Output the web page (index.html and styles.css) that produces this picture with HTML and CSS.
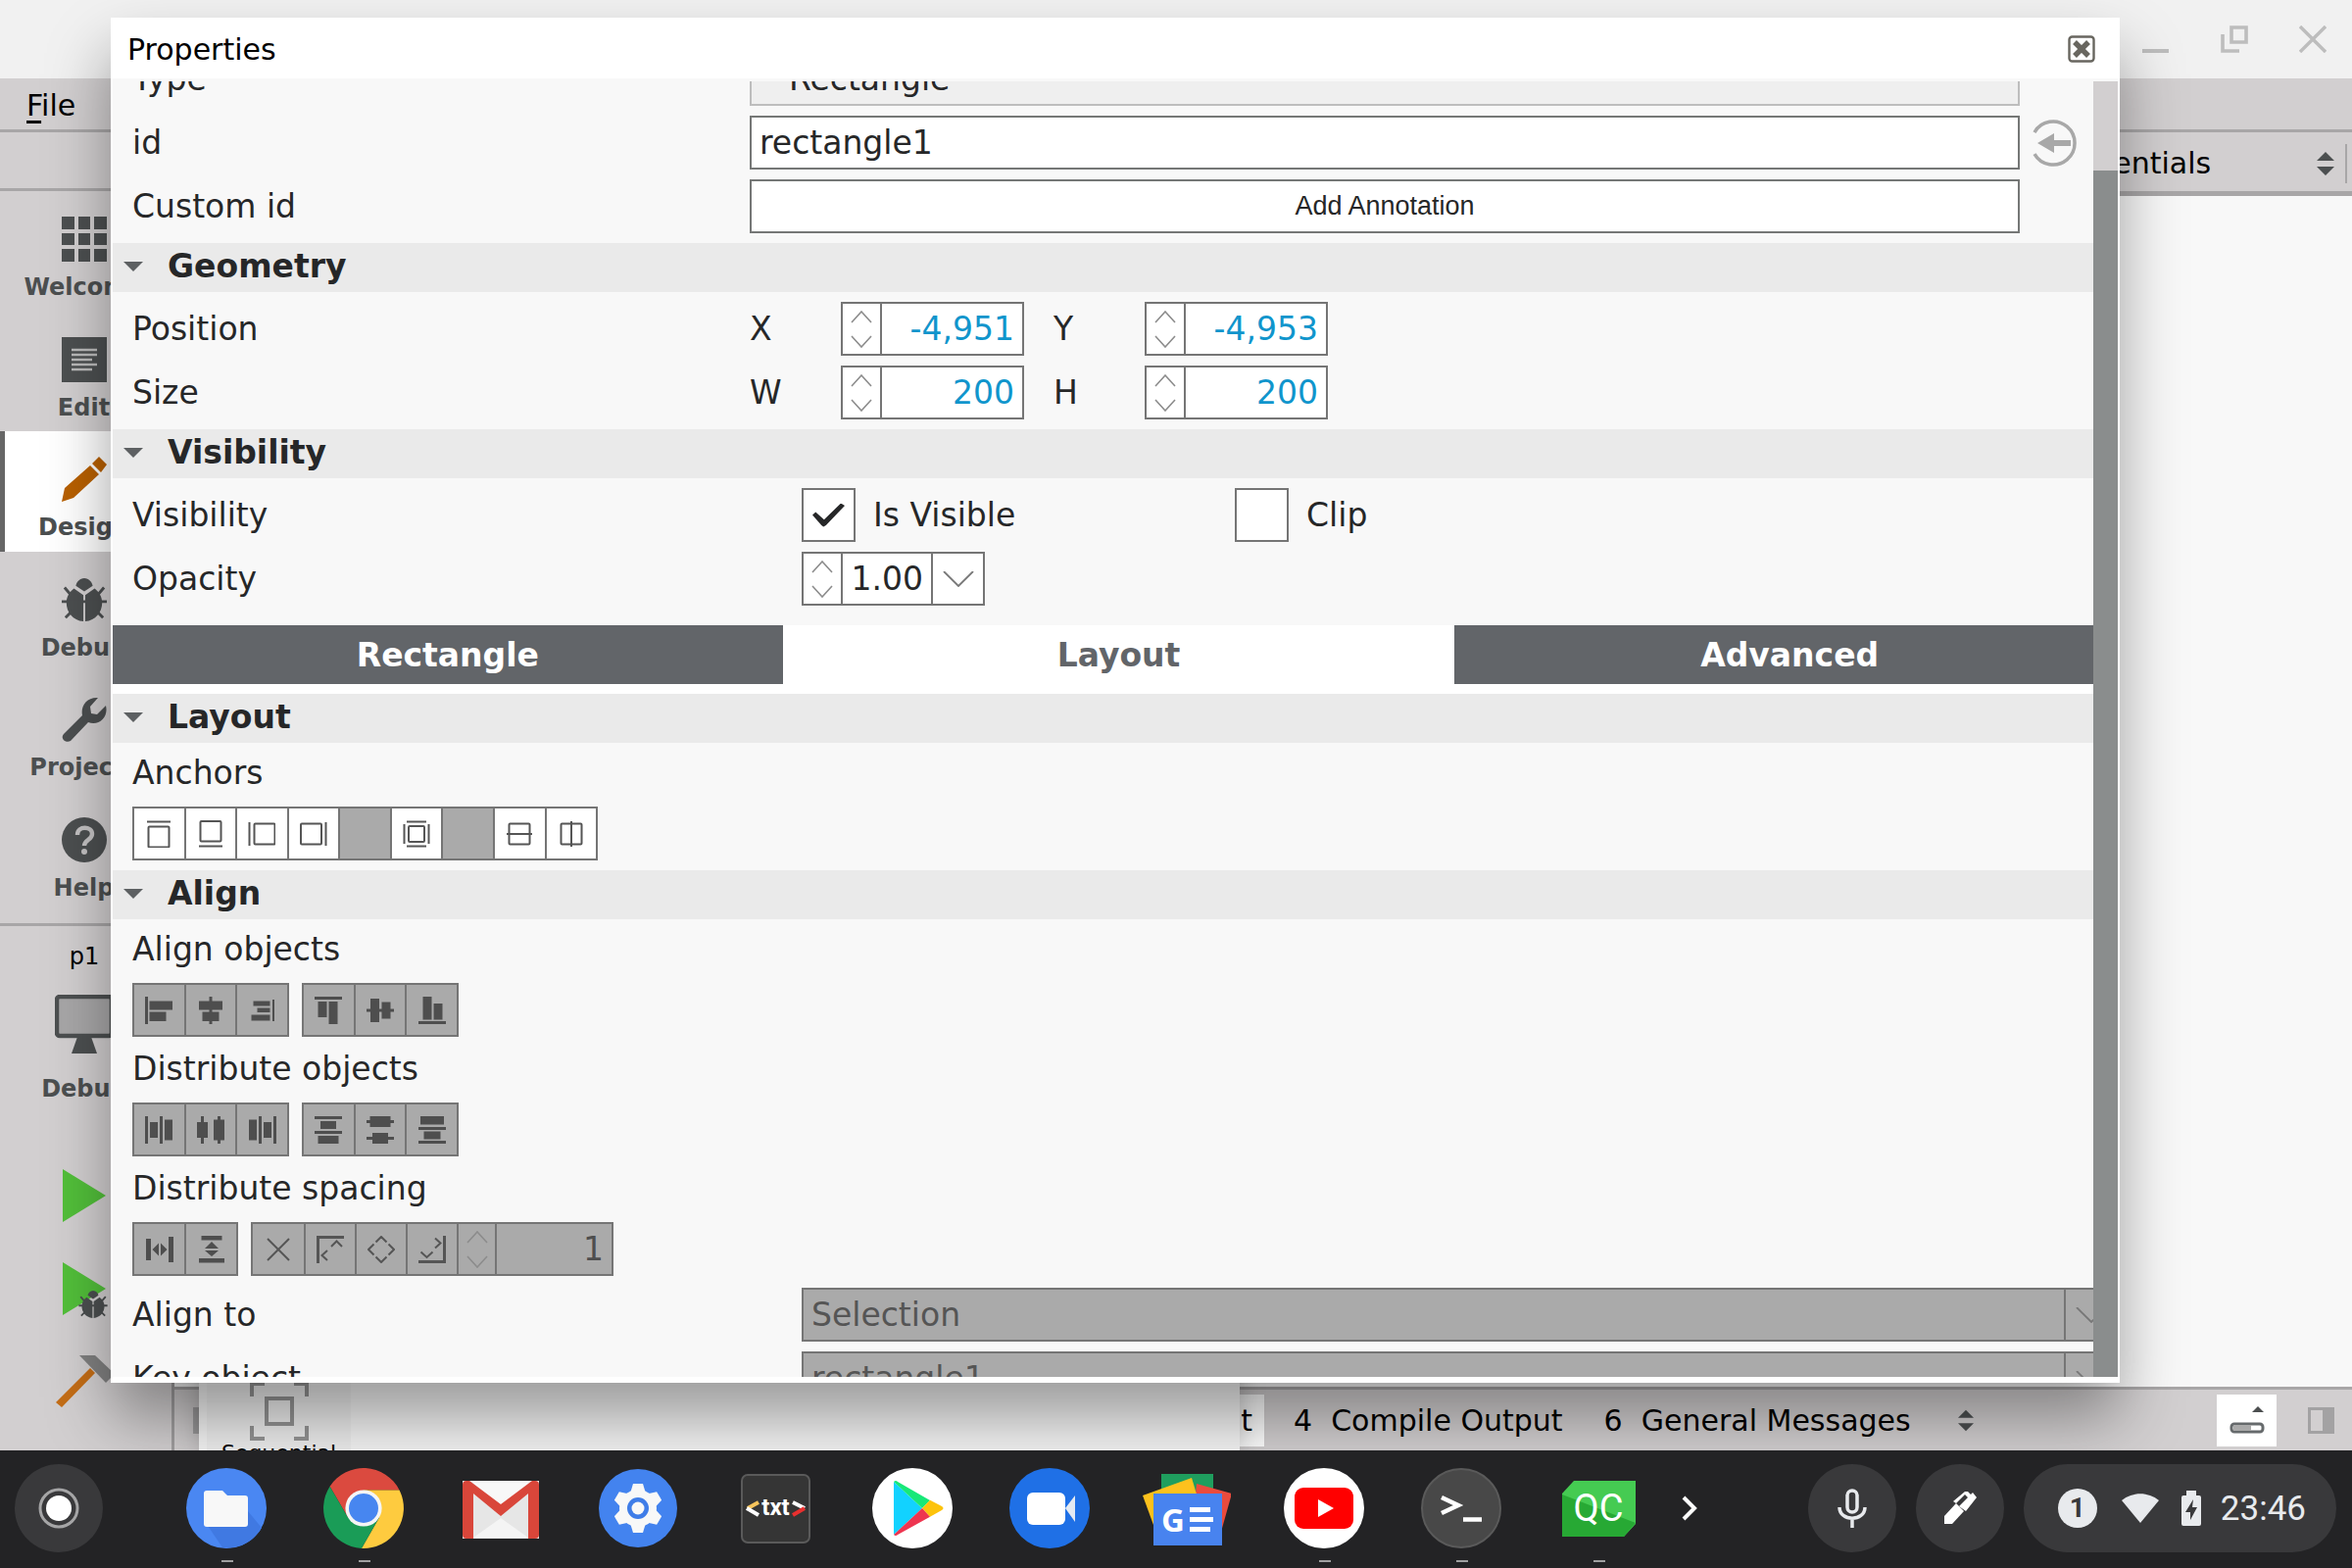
FILE: index.html
```html
<!DOCTYPE html>
<html lang="en">
<head>
  <meta charset="UTF-8">
  <title>Properties</title>
  <link rel="stylesheet" href="styles.css">
</head>
<body>
  <svg class="symbols" aria-hidden="true">
    <symbol id="bug" viewBox="0 0 48 46"><path d="M24 0c5 0 8 4 9 8l-9 6-9-6c1-4 4-8 9-8zM13 11l10 7v28C12 45 5 36 5 26c0-6 3-11 8-15zM35 11l-10 7v28c11-1 18-10 18-20 0-6-3-11-8-15z"/><path d="M0 25h48M3 10l6 7M45 10l-6 7M4 42l7-7M44 42l-7-7" stroke="#4c4f50" stroke-width="3"/></symbol>
    <symbol id="steps" viewBox="0 0 22 38"><path d="M1 12 11 1l10 11M1 26l10 11 10-11" fill="none" stroke="#8c8c8c" stroke-width="1.6"/></symbol>
    <symbol id="drop" viewBox="0 0 32 16"><path d="M1 0l15 15L31 0" fill="none" stroke="#777" stroke-width="1.8"/></symbol>
    <symbol id="updown" viewBox="0 0 18 24"><path d="M9 0l9 9H0zM9 24l9-9H0z"/></symbol>
  </svg>

  <div class="desktop">
    <div class="ide">
      <div class="titlebar">
        <button aria-label="Minimize"><svg width="28" height="28" viewBox="0 0 28 28"><path d="M0 24h27v4H0z" fill="#bdbdbd"/></svg></button>
        <button aria-label="Restore"><svg width="28" height="28" viewBox="0 0 28 28" fill="none" stroke="#bdbdbd" stroke-width="3.6"><path d="M11 2h15v15H11zM2 9v17h17"/></svg></button>
        <button aria-label="Close window"><svg width="28" height="28" viewBox="0 0 28 28" fill="none" stroke="#bdbdbd" stroke-width="3.4"><path d="M1 1l26 26M27 1L1 27"/></svg></button>
      </div>
      <div class="menubar"><button><u>F</u>ile</button></div>
      <div class="ide-body">
        <div class="sidebar">
          <div class="strip"></div>
          <div class="modes">
            <button><svg width="46" height="46" viewBox="0 0 46 46"><path d="M0 0h13v13H0zM17 0h12v13H17zM33 0h13v13H33zM0 17h13v12H0zM17 17h12v12H17zM33 17h13v12H33zM0 33h13v13H0zM17 33h12v13H17zM33 33h13v13H33z"/></svg>Welcome</button>
            <button><svg width="46" height="46" viewBox="0 0 46 46"><path d="M0 0h46v46H0z"/><path d="M10 13h26M10 18h26M10 23h21M10 28h26M10 33h21" stroke="#bbb" stroke-width="2.6"/></svg>Edit</button>
            <button class="active"><svg width="46" height="46" viewBox="0 0 46 46" fill="#b86000"><path d="M0 46l3-14 26-23 9 9-26 24zM31 7l7-7 8 8-6 8z"/></svg>Design</button>
            <button><svg width="46" height="46"><use href="#bug"/></svg>Debug</button>
            <button><svg width="46" height="46" viewBox="0 0 46 46"><path d="M2 38l19-19C19 9 26 0 37 1l-8 9 1 7 6 1 9-9c3 12-7 21-18 17L9 45c-5 3-11-3-7-7z"/></svg>Projects</button>
            <button><svg width="46" height="46" viewBox="0 0 46 46"><circle cx="23" cy="23" r="23"/><path d="M16 18c0-10 15-9 15-1 0 6-8 6-8 12" fill="none" stroke="#c4c2c3" stroke-width="4.4"/><circle cx="23" cy="35" r="3" fill="#c4c2c3"/></svg>Help</button>
          </div>
          <div class="kit">
            <span class="project">p1</span>
            <svg width="60" height="60" viewBox="0 0 60 60"><rect x="2" y="2" width="56" height="40" rx="3" fill="#a8a7a8" stroke="#4c4f50" stroke-width="4.5"/><path d="M23 43h14l6 17H17z"/></svg>
            <span class="kit-name">Debug</span>
          </div>
          <div class="run">
            <button aria-label="Run"><svg width="44" height="54" viewBox="0 0 44 54"><path d="M0 0l44 27L0 54z" fill="#52bf3a"/></svg></button>
            <button aria-label="Start debugging"><svg width="44" height="54" viewBox="0 0 44 54" overflow="visible"><path d="M0 0l44 27L0 54z" fill="#52bf3a"/><use href="#bug" x="15" y="29" width="32" height="28"/></svg></button>
            <button aria-label="Build"><svg width="60" height="54" viewBox="0 0 60 54"><path d="M25 0h16l20 19-9 9z" fill="#808080"/><path d="M36 13l5 5L7 53l-6-5z" fill="#c46d16"/></svg></button>
          </div>
        </div>
        <div class="main">
          <div class="toolbar">
            <select aria-label="Workspace"><option>Essentials</option></select>
            <svg width="18" height="24"><use href="#updown"/></svg>
          </div>
          <div class="canvas"></div>
          <div class="statusbar">
            <button class="pane-toggle" aria-label="Toggle left pane"><svg width="27" height="27" viewBox="0 0 27 27"><path d="M0 0h27v27H0zM12 3v21h12V3z" fill="#a3a2a3" fill-rule="evenodd"/></svg></button>
            <button class="out current">3  Application Output</button>
            <button class="out">4  Compile Output</button>
            <button class="out">6  General Messages</button>
            <svg class="more" width="16" height="23"><use href="#updown"/></svg>
            <button class="progress-toggle" aria-label="Toggle progress details"><svg width="36" height="28" viewBox="0 0 36 28"><path d="M29 0l6 6H23z"/><rect x="2" y="18" width="32" height="8" rx="3" fill="#fff" stroke="#666a6c" stroke-width="3"/><path d="M4 19h18v6H4z" fill="#aaa"/></svg></button>
            <button class="pane-toggle" aria-label="Toggle right pane"><svg width="27" height="27" viewBox="0 0 27 27"><path d="M0 0h27v27H0zM3 3v21h12V3z" fill="#a3a2a3" fill-rule="evenodd"/></svg></button>
          </div>
        </div>
      </div>
    </div>

    <div class="library">
      <div class="library-item">
        <svg width="60" height="60" viewBox="0 0 60 60" fill="none" stroke="#949494"><path d="M2 15V2h13M45 2h13v13M58 45v13H45M15 58H2V45" stroke-width="4"/><rect x="17" y="17" width="26" height="26" stroke-width="4"/></svg>
        Sequential
      </div>
    </div>

    <div class="dialog" role="dialog" aria-labelledby="dialog-title">
      <div class="dialog-head">
        <span id="dialog-title">Properties</span>
        <button aria-label="Close"><svg width="28" height="28" viewBox="0 0 28 28"><rect x="1.500" y="1.500" width="25" height="25" rx="3" fill="none" stroke="#68665f" stroke-width="2.400"/><path d="M7 7l14 14M21 7L7 21" stroke="#68665f" stroke-width="5.500"/></svg></button>
      </div>
      <div class="dialog-body">
        <div class="viewport">
          <div class="content">
            <div class="row">
              <label for="type">Type</label>
              <input id="type" class="field readonly" value="Rectangle" readonly>
              <span class="row-end"></span>
            </div>
            <div class="row">
              <label for="id">id</label>
              <input id="id" class="field" value="rectangle1">
              <span class="row-end"><button class="export" aria-label="Export as alias"><svg width="48" height="48" viewBox="0 0 48 48"><path d="M2 13a22 22 0 1 1 0 22" fill="none" stroke="#a8a8a8" stroke-width="3.500"/><path d="M5 24l17-10v7h17v6H22v7z" fill="#a8a8a8"/></svg></button></span>
            </div>
            <div class="row">
              <span class="label">Custom id</span>
              <button class="field annotate">Add Annotation</button>
              <span class="row-end"></span>
            </div>

            <h2>Geometry</h2>
            <div class="rows">
              <div class="row">
                <span class="label">Position</span>
                <label class="axis" for="x">X</label>
                <span class="spin"><button aria-label="Step x"><svg width="22" height="38"><use href="#steps"/></svg></button><input id="x" value="-4,951"></span>
                <label class="axis second" for="y">Y</label>
                <span class="spin"><button aria-label="Step y"><svg width="22" height="38"><use href="#steps"/></svg></button><input id="y" value="-4,953"></span>
              </div>
              <div class="row">
                <span class="label">Size</span>
                <label class="axis" for="w">W</label>
                <span class="spin"><button aria-label="Step width"><svg width="22" height="38"><use href="#steps"/></svg></button><input id="w" value="200"></span>
                <label class="axis second" for="h">H</label>
                <span class="spin"><button aria-label="Step height"><svg width="22" height="38"><use href="#steps"/></svg></button><input id="h" value="200"></span>
              </div>
            </div>

            <h2>Visibility</h2>
            <div class="rows">
              <div class="row inset">
                <span class="label">Visibility</span>
                <label class="check"><input type="checkbox" checked>Is Visible</label>
                <label class="check"><input type="checkbox">Clip</label>
              </div>
              <div class="row inset">
                <label for="opacity">Opacity</label>
                <span class="spin plain"><button aria-label="Step opacity"><svg width="22" height="38"><use href="#steps"/></svg></button><input id="opacity" value="1.00"><button class="drop" aria-label="Opacity slider"><svg width="32" height="16"><use href="#drop"/></svg></button></span>
              </div>
            </div>

            <div class="tabs">
              <button>Rectangle</button>
              <button class="active">Layout</button>
              <button>Advanced</button>
            </div>

            <h2>Layout</h2>
            <div class="block">
              <span class="caption">Anchors</span>
              <div class="group nine">
                <button aria-label="Anchor top"><svg viewBox="0 0 28 28"><path d="M2 1.500h24"/><rect x="3.500" y="6.500" width="21" height="21" rx="1"/></svg></button>
                <button aria-label="Anchor bottom"><svg viewBox="0 0 28 28"><path d="M2 26.500h24"/><rect x="3.500" y="1" width="21" height="20.500" rx="1"/></svg></button>
                <button aria-label="Anchor left"><svg viewBox="0 0 28 28"><path d="M1.500 2v24"/><rect x="6.500" y="3.500" width="21" height="21" rx="1"/></svg></button>
                <button aria-label="Anchor right"><svg viewBox="0 0 28 28"><path d="M26.500 2v24"/><rect x="1" y="3.500" width="21" height="21" rx="1"/></svg></button>
                <span class="spacer"></span>
                <button aria-label="Fill parent"><svg viewBox="0 0 28 28"><path d="M4 1.500h20M4 26.500h20M1.500 4v20M26.500 4v20"/><rect x="6" y="6" width="16" height="16" rx="1"/></svg></button>
                <span class="spacer"></span>
                <button aria-label="Center vertically"><svg viewBox="0 0 28 28"><path d="M1 14h26"/><rect x="3.500" y="3.500" width="21" height="21" rx="1"/></svg></button>
                <button aria-label="Center horizontally"><svg viewBox="0 0 28 28"><path d="M14 1v26"/><rect x="3.500" y="3.500" width="21" height="21" rx="1"/></svg></button>
              </div>
            </div>

            <h2>Align</h2>
            <div class="block">
              <span class="caption">Align objects</span>
              <div class="groups">
                <div class="group three off">
                  <button disabled aria-label="Align left"><svg viewBox="0 0 28 28"><path d="M0 0h3v28H0zM4.500 4.500H28v9H4.500zM4.500 15.500h17V25h-17z"/></svg></button>
                  <button disabled aria-label="Align horizontal center"><svg viewBox="0 0 28 28"><path d="M12.500 0h3v28h-3zM2 4.500h24v9H2zM5.500 15.500h17V25h-17z"/></svg></button>
                  <button disabled aria-label="Align right"><svg viewBox="0 0 28 28"><path d="M24 3h2v22h-2zM4.500 4.500h17v5h-17zM8.500 11.500h13V16h-13zM2.500 18.500h19v6h-19z"/></svg></button>
                </div>
                <div class="group three off">
                  <button disabled aria-label="Align top"><svg viewBox="0 0 28 28"><path d="M0 0h28v3H0zM3.500 5h9v16h-9zM14.500 5h9v23h-9z"/></svg></button>
                  <button disabled aria-label="Align vertical center"><svg viewBox="0 0 28 28"><path d="M0 12.500h28v3H0zM4 2h9v24H4zM15.500 5.500h9v17h-9z"/></svg></button>
                  <button disabled aria-label="Align bottom"><svg viewBox="0 0 28 28"><path d="M0 25h28v3H0zM4.500 0h9v23.500h-9zM15.500 7h9v16.500h-9z"/></svg></button>
                </div>
              </div>
              <span class="caption">Distribute objects</span>
              <div class="groups">
                <div class="group three off">
                  <button disabled aria-label="Distribute left"><svg viewBox="0 0 28 28"><path d="M0 0h3v28H0zM15 0h3v28h-3zM5 6h8v16H5zM20 3.500h8v21h-8z"/></svg></button>
                  <button disabled aria-label="Distribute horizontal center"><svg viewBox="0 0 28 28"><path d="M0 6h11v16H0zM4 0h3v28H4zM17 3.500h11v21H17zM21 0h3v28h-3z"/></svg></button>
                  <button disabled aria-label="Distribute right"><svg viewBox="0 0 28 28"><path d="M0 3.500h8v21H0zM10 0h3v28h-3zM15 6h8v16h-8zM25 0h3v28h-3z"/></svg></button>
                </div>
                <div class="group three off">
                  <button disabled aria-label="Distribute top"><svg viewBox="0 0 28 28"><path d="M0 0h28v3H0zM0 15h28v3H0zM6 5h16v8H6zM3.500 20h21v8h-21z"/></svg></button>
                  <button disabled aria-label="Distribute vertical center"><svg viewBox="0 0 28 28"><path d="M3.500 0h21v11h-21zM0 4h28v3H0zM6 17h16v11H6zM0 21h28v3H0z"/></svg></button>
                  <button disabled aria-label="Distribute bottom"><svg viewBox="0 0 28 28"><path d="M2 0h24v8.500H2zM0 11h28v3H0zM5.500 15.500h17v8h-17zM0 25h28v3H0z"/></svg></button>
                </div>
              </div>
              <span class="caption">Distribute spacing</span>
              <div class="groups">
                <div class="group two off">
                  <button disabled aria-label="Space horizontally"><svg viewBox="0 0 28 28"><path d="M0 3h5v22H0zM23 1h5v26h-5zM6.500 14L13 7.500v13zM21.500 14L15 7.500v13z"/></svg></button>
                  <button disabled aria-label="Space vertically"><svg viewBox="0 0 28 28"><path d="M3.500 0h21v4.500h-21zM1 23h26v4.500H1zM14 6l7 7H7zM7 15h14l-7 6z"/></svg></button>
                </div>
                <div class="group spacing off">
                  <button disabled class="thin" aria-label="No origin"><svg viewBox="0 0 28 28"><path d="M3 3l22 22M25 3L3 25"/></svg></button>
                  <button disabled class="thin" aria-label="Origin top left"><svg viewBox="0 0 28 28"><path d="M1.500 28V1.500H28" stroke-width="3"/><path d="M15 11l5.500-5.500L26 11M11 15l-5.500 5L11 25"/></svg></button>
                  <button disabled class="thin" aria-label="Origin center"><svg viewBox="0 0 28 28"><path d="M8.500 6.500L14 1l5.500 5.500M21.500 8.500L27 14l-5.500 5.500M19.500 21.500L14 27l-5.500-5.500M6.500 19.500L1 14l5.500-5.500"/></svg></button>
                  <button disabled class="thin" aria-label="Origin bottom right"><svg viewBox="0 0 28 28"><path d="M0 26.500h26.500V0" stroke-width="3"/><path d="M17 2.500l5.500 5-5.500 5M2.500 16.500l6 5.500 6-5.500"/></svg></button>
                  <button disabled class="narrow" aria-label="Step spacing"><svg width="22" height="38"><use href="#steps"/></svg></button>
                  <input disabled aria-label="Spacing" value="1">
                </div>
              </div>
            </div>
            <div class="row inset">
              <label for="align-to">Align to</label>
              <span class="combo"><select id="align-to" disabled><option>Selection</option></select><svg width="32" height="16"><use href="#drop"/></svg></span>
            </div>
            <div class="row inset">
              <label for="key-object">Key object</label>
              <span class="combo"><select id="key-object" disabled><option>rectangle1</option></select><svg width="32" height="16"><use href="#drop"/></svg></span>
            </div>
          </div>
        </div>
        <div class="scrollbar"><div class="thumb"></div></div>
      </div>
    </div>
  </div>

  <div class="shelf">
    <button class="round" aria-label="Launcher"><svg width="42" height="42" viewBox="0 0 42 42"><circle cx="21" cy="21" r="19" fill="none" stroke="#a5a5a6" stroke-width="3"/><circle cx="21" cy="21" r="13" fill="#fff"/></svg></button>
    <div class="apps">
      <button class="running" aria-label="Files"><svg viewBox="0 0 90 90"><circle cx="45" cy="45" r="41" fill="#4a87f2"/><path d="M26 63l15 22c17 2 33-7 40-20L67 48z" fill="#4079e2"/><path d="M25 27h16l5 5h18q3 0 3 3v26q0 3-3 3H25q-3 0-3-3V30q0-3 3-3z" fill="#f8f8f8"/></svg></button>
      <button class="running" aria-label="Chrome"><svg viewBox="0 0 90 90"><path d="M45 26.400H81.500A41 41 0 0 0 10.600 22.700L28.900 54.300 45 45z" fill="#db4a3f"/><path d="M45 26.400H81.500A41 41 0 0 1 42.900 85.900L61.100 54.300 45 45z" fill="#fecb3f"/><path d="M10.600 22.700A41 41 0 0 0 42.900 85.900L61.100 54.300 45 45 28.900 54.300z" fill="#1a9c57"/><circle cx="45" cy="45" r="18.600" fill="#f5f5f5"/><circle cx="45" cy="45" r="15" fill="#4786f0"/></svg></button>
      <button aria-label="Gmail"><svg viewBox="0 0 90 90"><path d="M6 17h78v59H6z" fill="#e6e6e6"/><path d="M17 75l28-20 28 20z" fill="#f4f4f4"/><path d="M14 17h62L45 45z" fill="#f8f8f8"/><path d="M10 17q-4 0-4 4v51q0 4 4 4h7V30l28 23 28-23v46h7q4 0 4-4V21q0-4-4-4h-3L45 41 13 17z" fill="#d9463a"/></svg></button>
      <button aria-label="Settings"><svg viewBox="0 0 90 90"><circle cx="45" cy="45" r="40" fill="#4383ef"/><g fill="#f8f8f8"><circle cx="45" cy="45" r="19"/><path d="M40 20h10l3 10v30l-3 10H40l-3-10V30z"/><path d="M40 20h10l3 10v30l-3 10H40l-3-10V30z" transform="rotate(60 45 45)"/><path d="M40 20h10l3 10v30l-3 10H40l-3-10V30z" transform="rotate(120 45 45)"/></g><circle cx="45" cy="45" r="11" fill="#3f7de8"/><circle cx="45" cy="45" r="6.500" fill="#f8f8f8"/></svg></button>
      <button aria-label="Text editor"><svg viewBox="0 0 90 90"><rect x="11" y="11" width="69" height="69" rx="6" fill="#353535" stroke="#5a5a5a" stroke-width="2"/><text x="45.500" y="52" class="logo-txt">txt</text><g fill="none" stroke-width="4"><path d="M28 39l-11 6" stroke="#f5c35b"/><path d="M16 45l12 7M63 39l12 6" stroke="#fff"/><path d="M75 45l-12 7" stroke="#e8302f"/></g></svg></button>
      <button aria-label="Play Store"><svg viewBox="0 0 90 90"><circle cx="45" cy="45" r="41" fill="#fff"/><path d="M26 18v54l29-27z" fill="#12d2ff"/><path d="M26 18q2-2 4 0l33 19-8 8z" fill="#17e878"/><path d="M63 36.700L75 43q3 2 0 4L63 53.700 55 45z" fill="#fdc30c"/><path d="M26 72q2 2 4 0l33-18.300L55 45z" fill="#ee3550"/></svg></button>
      <button aria-label="Video calls"><svg viewBox="0 0 90 90"><circle cx="45" cy="45" r="41" fill="#1f70e6"/><rect x="22" y="29" width="39" height="33" rx="6" fill="#fff"/><path d="M61 45l10-13v27z" fill="#e4eaf2"/></svg></button>
      <button aria-label="News"><svg viewBox="0 0 90 90"><path d="M19 10h53v40H19z" fill="#1f9e5e"/><path d="M55 20l36 10-11 39H50z" fill="#ea4b3d"/><path d="M0 32l50-18 12 40-51 8z" fill="#fdc11d"/><path d="M11 30h70v53H11z" fill="#4883ef"/><text x="31" y="69" class="logo-g">G</text><path d="M48 44h21v5H48zM48 54h24v5H48zM48 64h21v5H48z" fill="#fff"/></svg></button>
      <button class="running" aria-label="YouTube"><svg viewBox="0 0 90 90"><circle cx="45" cy="45" r="41" fill="#fff"/><rect x="15" y="24" width="60" height="42" rx="9" fill="#f00"/><path d="M39 36l16 9-16 9z" fill="#fff"/></svg></button>
      <button class="running" aria-label="Terminal"><svg viewBox="0 0 90 90"><circle cx="45" cy="45" r="40" fill="#484848" stroke="#5a5a5a" stroke-width="2"/><path d="M25 34l17 8-17 8M47 56.500h19" fill="none" stroke="#fff" stroke-width="4.500"/></svg></button>
      <button class="running" aria-label="Qt Creator"><svg viewBox="0 0 90 90"><path d="M20 17h63v44L71 74H8V30z" fill="#45cb52"/><path d="M8 31l75 29L71 74H8z" fill="#27a934"/><text x="45" y="58" class="logo-qc">QC</text></svg></button>
    </div>
    <button class="overflow" aria-label="More apps"><svg width="18" height="26" viewBox="0 0 18 26"><path d="M3 2l11 11L3 24" fill="none" stroke="#fff" stroke-width="4"/></svg></button>
    <button class="round" aria-label="Microphone"><svg width="30" height="40" viewBox="0 0 30 40" fill="none" stroke="#e8eaed" stroke-width="3.500"><rect x="10" y="2" width="10" height="22" rx="5"/><path d="M2 19c0 15 26 15 26 0M15 30v10"/></svg></button>
    <button class="round" aria-label="Stylus"><svg width="34" height="34" viewBox="0 0 34 34" fill="#fff"><path d="M1 25l12-13 8 8L9 33H1z"/><path d="M16 15l9-9-3-3-9 9-3-2L22 0h3l3 3 2-2 4 5-11 14z"/></svg></button>
    <button class="tray">
      <span class="badge">1</span>
      <svg class="wifi" width="38" height="30" viewBox="0 0 38 30"><path d="M0 7C11-2 27-2 38 7L19 30z"/></svg>
      <svg width="20" height="36" viewBox="0 0 20 36"><path d="M5 0h10v5h3q2 0 2 2v27q0 2-2 2H2q-2 0-2-2V7q0-2 2-2h3z"/><path d="M12 9L4 22h5v8l7-13h-5z" fill="#39393b"/></svg>
      <time>23:46</time>
    </button>
  </div>
</body>
</html>
```
FILE: styles.css
```css
* {
  box-sizing: border-box;
}
body {
  margin: 0;
  height: 100vh;
  display: flex;
  flex-direction: column;
  overflow: hidden;
  font-family: "DejaVu Sans", sans-serif;
  font-size: 30px;
  color: #000;
}
button, input, select {
  font: inherit;
  color: inherit;
  background: none;
  border: 0;
  border-radius: 0;
  padding: 0;
  margin: 0;
  min-width: 0;
  opacity: 1;
}
select {
  appearance: none;
}
svg {
  display: block;
  flex: none;
}
.symbols {
  position: absolute;
  width: 0;
  height: 0;
}

/* ide window */
.desktop {
  flex: 1;
  min-height: 0;
  position: relative;
  overflow: hidden;
}
.ide {
  height: 100%;
  display: flex;
  flex-direction: column;
  background: #d2cfd0;
}
.titlebar {
  height: 80px;
  background: #f1f1f1;
  display: flex;
  justify-content: flex-end;
  align-items: center;
  gap: 52px;
  padding-right: 26px;
}
.menubar {
  height: 55px;
  border-bottom: 3px solid #a8a6a7;
  padding: 3px 0 0 27px;
  display: flex;
  align-items: center;
}
.menubar u {
  text-underline-offset: 5px;
}
.ide-body {
  flex: 1;
  min-height: 0;
  display: flex;
}
.sidebar {
  width: 178px;
  border-right: 3px solid #a09e9f;
  color: #4c4f50;
  fill: #4c4f50;
  font-size: 24px;
  line-height: 28px;
}
.strip {
  height: 60px;
  border-bottom: 3px solid #a8a6a7;
}
.modes {
  height: 735px;
  display: grid;
  grid-template-rows: repeat(6, 1fr);
}
.modes button {
  display: flex;
  flex-direction: column;
  align-items: center;
  gap: 12px;
  padding: 26px 4px 0 0;
  font-weight: bold;
}
.modes .active {
  background: #fff;
  border-left: 5px solid #666;
  padding-right: 9px;
}
.kit {
  margin-top: 12px;
  border-top: 3px solid #a8a6a7;
  padding: 17px 3px 0 0;
  display: flex;
  flex-direction: column;
  align-items: center;
}
.project {
  color: #000;
  margin-bottom: 25px;
}
.kit-name {
  font-weight: bold;
  margin-top: 22px;
}
.run {
  margin-top: 68px;
  padding-right: 3px;
  display: flex;
  flex-direction: column;
  align-items: center;
  gap: 41px;
}
.main {
  flex: 1;
  min-width: 0;
  display: flex;
  flex-direction: column;
}
.toolbar {
  height: 65px;
  border-bottom: 5px solid #a8a6a7;
  padding: 3px 5px 0 0;
  display: flex;
  justify-content: flex-end;
  align-items: center;
  fill: #4c4f50;
}
.toolbar select {
  width: 258px;
}
.toolbar::after {
  content: "";
  width: 2px;
  height: 40px;
  margin-left: 11px;
  background: #a8a6a7;
}
.canvas {
  flex: 1;
  background: #f8f8f8;
}
.statusbar {
  height: 65px;
  border-top: 3px solid #a8a6a7;
  padding: 0 18px 0 19px;
  display: flex;
  align-items: center;
  fill: #4c4f50;
}
.out {
  white-space: pre;
  padding-left: 42px;
}
.current {
  width: 360px;
  height: 53px;
  margin: 0 -12px 0 706px;
  padding: 0 12px 0 0;
  text-align: right;
  background: #fff;
}
.more {
  margin: 0 auto 0 48px;
}
.progress-toggle {
  width: 61px;
  height: 53px;
  margin-right: 32px;
  background: #fff;
  display: flex;
  justify-content: center;
  align-items: center;
}

/* library window peeking out below */
.library {
  position: absolute;
  left: 203px;
  bottom: 0;
  width: 1062px;
  height: 120px;
  padding-left: 8px;
  background: #f4f4f4;
  box-shadow: 0 0 24px rgba(0, 0, 0, 0.25);
  overflow: hidden;
}
.library-item {
  width: 147px;
  height: 160px;
  padding-top: 50px;
  background: #ededed;
  font-size: 22px;
  line-height: 26px;
  text-align: center;
}
.library-item svg {
  margin: 0 auto;
}

/* properties dialog */
.dialog {
  position: absolute;
  left: 113px;
  right: 237px;
  top: 18px;
  bottom: 69px;
  background: #fff;
  box-shadow: 0 36px 60px rgba(0, 0, 0, 0.37);
  display: flex;
  flex-direction: column;
}
.dialog-head {
  height: 62px;
  padding: 2px 25px 0 17px;
  display: flex;
  justify-content: space-between;
  align-items: center;
}
.dialog-body {
  flex: 1;
  min-height: 0;
  margin: 0 2px 6px;
  border-top: 3px solid #f8f8f8;
  display: flex;
  color: #262728;
  font-size: 33px;
}
.viewport {
  flex: 1;
  min-width: 0;
  overflow: hidden;
  background: #f8f8f8;
}
/* scrolled down a little and wider than the viewport */
.content {
  width: calc(100% + 32px);
  margin-top: -30px;
}
.scrollbar {
  width: 25px;
  padding-top: 91px;
  background: #d2cfd0;
}
.thumb {
  height: 100%;
  background: #8a8d8d;
}
.row {
  height: 55px;
  margin-bottom: 10px;
  padding-left: 20px;
  display: flex;
  align-items: center;
}
.row > :first-child {
  width: 630px;
}
.inset > :first-child {
  width: 683px;
}
.rows {
  padding-top: 10px;
}
.field {
  flex: 1;
  height: 55px;
  border: 2px solid #757776;
  background: #fff;
  padding: 0 8px;
}
.readonly {
  border-color: #bdbdbd;
  background: #efefef;
  padding-left: 38px;
}
.annotate {
  font-family: "Liberation Sans", sans-serif;
  font-size: 27px;
}
.row-end {
  width: 107px;
  padding-left: 13px;
  display: flex;
}
h2 {
  margin: 0;
  height: 50px;
  padding: 0 0 3px 11px;
  display: flex;
  align-items: center;
  gap: 25px;
  background: #eaeaea;
  font-size: 33px;
}
h2::before {
  content: "";
  border: 10px solid transparent;
  border-top-color: #5d6062;
  border-bottom: 0;
}
.axis {
  width: 93px;
}
.second {
  margin-left: 30px;
}
.spin {
  width: 187px;
  height: 55px;
  display: flex;
  border: 2px solid #757575;
  background: #fff;
  color: #1095cc;
}
.plain {
  color: inherit;
}
.spin button {
  width: 38px;
  display: flex;
  justify-content: center;
  align-items: center;
}
.spin input {
  flex: 1;
  border-left: 2px solid #757575;
  padding-right: 8px;
  text-align: right;
}
.spin .drop {
  width: 53px;
  border-left: 2px solid #757575;
}
.check {
  width: 442px;
  display: flex;
  align-items: center;
  gap: 18px;
}
.check input {
  appearance: none;
  width: 55px;
  height: 55px;
  border: 2px solid #757575;
  background: #fff;
  display: flex;
  justify-content: center;
  align-items: center;
}
.check input:checked::before {
  content: "";
  width: 33px;
  height: 24px;
  background: #262728;
  clip-path: polygon(0 50%, 10% 38%, 36% 70%, 88% 0, 100% 10%, 42% 94%, 34% 100%, 28% 94%);
}
.tabs {
  margin-top: 20px;
  border-bottom: 10px solid #fff;
  background: #fff;
  display: grid;
  grid-template-columns: repeat(3, 1fr);
  gap: 1px;
}
.tabs button {
  height: 60px;
  background: #626569;
  color: #fff;
  font-weight: bold;
}
.tabs .active {
  background: #fff;
  color: #626569;
}
.block {
  padding: 0 0 10px 20px;
}
.caption {
  display: block;
  height: 65px;
  line-height: 62px;
}
.groups {
  display: flex;
  gap: 13px;
  margin-bottom: 2px;
}
.group {
  height: 55px;
  display: flex;
  border: 2px solid #757575;
  background: #fff;
}
.group > * {
  flex: 1;
  display: flex;
  justify-content: center;
  align-items: center;
}
.group > * + * {
  border-left: 2px solid #757575;
}
.group button svg {
  width: 28px;
  height: 28px;
  fill: #4e4e4e;
}
.nine {
  width: 475px;
}
.nine button svg {
  fill: none;
  stroke: #555;
  stroke-width: 2;
}
.spacer {
  background: #aaa;
}
.three {
  width: 160px;
}
.two {
  width: 108px;
}
.off {
  background: #aaa;
  color: #4e4e4e;
}
.spacing {
  width: 370px;
}
.spacing .thin {
  flex: none;
  width: 52px;
}
.spacing .thin svg {
  fill: none;
  stroke: #555;
  stroke-width: 2;
}
.spacing .narrow {
  flex: none;
  width: 39px;
}
.spacing .narrow svg {
  width: 22px;
  height: 38px;
}
.spacing input {
  text-align: right;
  padding-right: 8px;
}
.combo {
  flex: 1;
  height: 55px;
  margin-right: 6px;
  padding-right: 10px;
  display: flex;
  align-items: center;
  gap: 10px;
  border: 2px solid #757575;
  background: #aaa;
  color: #555;
}
.combo select {
  flex: 1;
  height: 100%;
  padding-left: 8px;
  border-right: 2px solid #757575;
}

/* shelf */
.shelf {
  position: relative;
  height: 120px;
  padding: 0 16px 2px 15px;
  display: flex;
  align-items: center;
  gap: 20px;
  background: #232325;
  color: #e8eaed;
  font-family: Roboto, sans-serif;
}
.round {
  width: 90px;
  height: 90px;
  border-radius: 45px;
  background: #39393b;
  display: flex;
  justify-content: center;
  align-items: center;
}
.apps {
  margin-left: 36px;
  display: flex;
}
.apps button {
  position: relative;
  width: 140px;
  height: 118px;
  display: flex;
  justify-content: center;
  align-items: center;
}
.apps svg {
  width: 90px;
  height: 90px;
}
.running::after {
  content: "";
  position: absolute;
  left: 65px;
  bottom: 4px;
  width: 12px;
  height: 2px;
  background: #a0a0a1;
}
.apps text {
  fill: #fff;
  text-anchor: middle;
}
.logo-txt {
  font: bold 24px "Liberation Sans Narrow", Roboto, sans-serif;
}
.logo-g {
  font: bold 33px "Open Sans", sans-serif;
}
.logo-qc {
  font: 38px "Liberation Sans Narrow", Roboto, sans-serif;
}
.overflow {
  margin: 0 auto 0 -6px;
}
.tray {
  height: 90px;
  border-radius: 45px;
  padding: 0 31px 0 35px;
  display: flex;
  align-items: center;
  gap: 20px;
  background: #39393b;
  fill: #e8eaed;
  font-size: 35px;
}
.badge {
  width: 40px;
  height: 40px;
  margin-right: 5px;
  border-radius: 20px;
  background: #e8eaed;
  color: #39393b;
  font-size: 28px;
  font-weight: bold;
  line-height: 40px;
}
.wifi {
  margin-right: 3px;
}
```
